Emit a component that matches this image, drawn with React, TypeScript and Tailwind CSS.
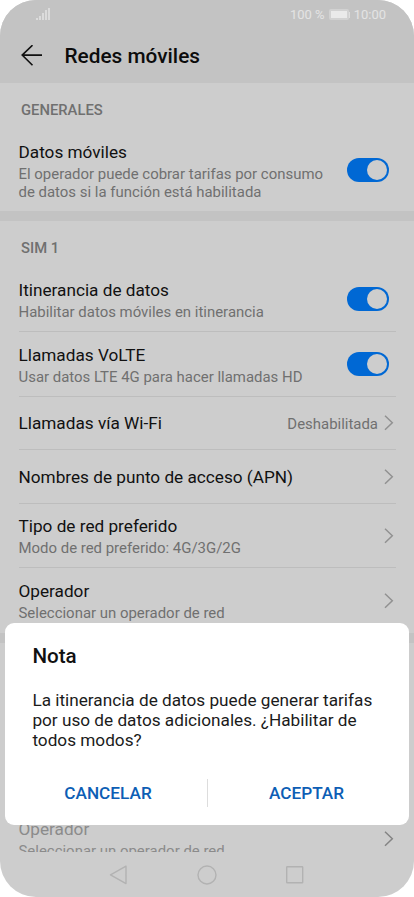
import type { ReactNode } from "react";

function Switch() {
  return (
    <div className="mr-[7px] flex h-6 w-[42px] shrink-0 items-center justify-end rounded-full bg-[#0068d4] pr-[2px]">
      <div className="size-5 rounded-full bg-[#cdcdcd]" />
    </div>
  );
}

function Chevron({ dark = false }: { dark?: boolean }) {
  return (
    <svg
      className={`mr-[2px] h-4 w-[10px] shrink-0 ${dark ? "text-[#848484]" : "text-[#919191]"}`}
      viewBox="0 0 10 16"
      fill="none"
      stroke="currentColor"
      strokeWidth="1.5"
    >
      <path d="M1 .7 8.3 7.7l-7.3 7" />
    </svg>
  );
}

interface RowProps {
  title: string;
  subtitle?: string;
  height: string;
  border?: boolean;
  muted?: boolean;
  textOffset?: string;
  children: ReactNode;
}

function Row({ title, subtitle, height, border = true, muted = false, textOffset = "", children }: RowProps) {
  return (
    <div
      className={`ml-[18.5px] mr-[18px] flex shrink-0 items-center justify-between ${height} ${border ? "border-b border-[#bdbdbd]" : ""}`}
    >
      <div className={`whitespace-nowrap ${textOffset}`}>
        <div className={`text-[17.2px] leading-[22px] ${muted ? "text-[#8b8b8b]" : "text-[#111111]"}`}>{title}</div>
        {subtitle && (
          <div className={`whitespace-pre-line pt-[2px] text-[14.95px] leading-[18px] ${muted ? "text-[#8b8b8b]" : "text-[#707070]"}`}>
            {subtitle}
          </div>
        )}
      </div>
      <div className="flex items-center">{children}</div>
    </div>
  );
}

function SectionTitle({ children }: { children: ReactNode }) {
  return (
    <div className="flex h-[45px] shrink-0 items-center pl-[21px] pt-[9px] text-[14.8px] font-medium text-[#707070]">
      {children}
    </div>
  );
}

function StatusBar() {
  return (
    <div className="flex h-[29px] items-center justify-between pl-9 pr-7 text-[13px] text-[#e4e4e4]">
      <div className="mb-[2px] flex h-3 items-end gap-px">
        <div className="h-[2px] w-[2px] bg-[#dcdcdc]" />
        <div className="h-[4px] w-[2px] bg-[#dcdcdc]" />
        <div className="h-[7px] w-[2px] bg-[#dcdcdc]" />
        <div className="h-[10px] w-[2px] bg-[#dcdcdc]" />
        <div className="h-3 w-[2px] bg-[#dcdcdc]" />
      </div>
      <div className="flex items-center">
        <span>100 %</span>
        <div className="ml-1 h-[11px] w-[20px] rounded-[2px] border-2 border-[#d2d2d2] bg-[#eaeaea]" />
        <div className="mr-1 h-[6px] w-px bg-[#dedede]" />
        <span>10:00</span>
      </div>
    </div>
  );
}

function Header() {
  return (
    <header className="h-[83px] shrink-0 bg-[#c3c3c3]">
      <StatusBar />
      <div className="flex h-[54px] items-center pl-[21px]">
        <svg className="h-[22px] w-[22px]" viewBox="0 0 22 22" fill="none" stroke="#111111" strokeWidth="1.6">
          <path d="M21 10.1H1.2M11.5 0.2 1.2 10.1l10.3 10.2" />
        </svg>
        <h1 className="ml-[21.5px] pt-[2px] text-[20.8px] font-medium text-[#0c0c0c]">Redes móviles</h1>
      </div>
    </header>
  );
}

function NavBar() {
  return (
    <nav className="flex h-[45px] shrink-0 items-center justify-center">
      <svg className="h-5 w-[196px]" viewBox="0 0 196 20" fill="none" stroke="#b2b2b2" strokeWidth="1.4" strokeLinejoin="round">
        <path d="M17 1.2v17.4L1.5 9.9Z" />
        <circle cx="98" cy="10" r="9" />
        <rect x="177.7" y="1.7" width="16" height="16" rx="0.5" />
      </svg>
    </nav>
  );
}

function NoteDialog() {
  return (
    <div
      role="dialog"
      className="absolute left-[5px] top-[623px] flex h-[202px] w-[404px] flex-col rounded-[9px] bg-white px-[27.4px] pt-5"
    >
      <h2 className="text-[20.6px] font-medium leading-[26px] text-[#111111]">Nota</h2>
      <p className="mt-[21px] whitespace-pre-line text-[17.2px] leading-[20.2px] text-[#1b1b1b]">
        {"La itinerancia de datos puede generar tarifas\npor uso de datos adicionales. ¿Habilitar de\ntodos modos?"}
      </p>
      <div className="-mx-[27.4px] mt-[28.4px] flex h-7 items-center text-[17.2px] font-medium text-[#0d5eb5]">
        <button className="w-[202px] pl-1 pt-[2px]">CANCELAR</button>
        <div className="h-7 w-px bg-[#dddddd]" />
        <button className="flex-1 pr-1 pt-[2px]">ACEPTAR</button>
      </div>
    </div>
  );
}

export default function App() {
  return (
    <div className="h-[897px] w-[414px] bg-white font-['Roboto',sans-serif]">
      <div className="relative flex h-full flex-col overflow-hidden rounded-[36px] bg-[#cdcdcd]">
        <Header />
        <main className="flex h-[769px] shrink-0 flex-col overflow-hidden">
          <SectionTitle>GENERALES</SectionTitle>
          <Row
            title="Datos móviles"
            subtitle={"El operador puede cobrar tarifas por consumo\nde datos si la función está habilitada"}
            height="h-[83px]"
            border={false}
            textOffset="pt-[3px]"
          >
            <Switch />
          </Row>
          <div className="h-[10px] shrink-0 bg-[#c3c3c3]" />
          <SectionTitle>SIM 1</SectionTitle>
          <Row
            title="Itinerancia de datos"
            subtitle="Habilitar datos móviles en itinerancia"
            height="h-[66px]"
            textOffset="pt-[3px]"
          >
            <Switch />
          </Row>
          <Row
            title="Llamadas VoLTE"
            subtitle="Usar datos LTE 4G para hacer llamadas HD"
            height="h-[65px]"
            textOffset="pt-px"
          >
            <Switch />
          </Row>
          <Row title="Llamadas vía Wi-Fi" height="h-[53px]">
            <span className="mr-[6px] pt-[2px] text-[14.95px] text-[#707070]">Deshabilitada</span>
            <Chevron />
          </Row>
          <Row title="Nombres de punto de acceso (APN)" height="h-[54px]">
            <Chevron />
          </Row>
          <Row
            title="Tipo de red preferido"
            subtitle="Modo de red preferido: 4G/3G/2G"
            height="h-[64px]"
            textOffset="pt-px"
          >
            <Chevron />
          </Row>
          <Row
            title="Operador"
            subtitle="Seleccionar un operador de red"
            height="h-[65px]"
            border={false}
            textOffset="pt-px"
          >
            <Chevron />
          </Row>
          <div className="h-[10px] shrink-0 bg-[#c3c3c3]" />
          <div className="h-[163px] shrink-0" />
          <Row
            title="Operador"
            subtitle="Seleccionar un operador de red"
            height="h-[65px]"
            border={false}
            textOffset="pt-px"
            muted
          >
            <Chevron dark />
          </Row>
        </main>
        <NavBar />
        <NoteDialog />
      </div>
    </div>
  );
}
